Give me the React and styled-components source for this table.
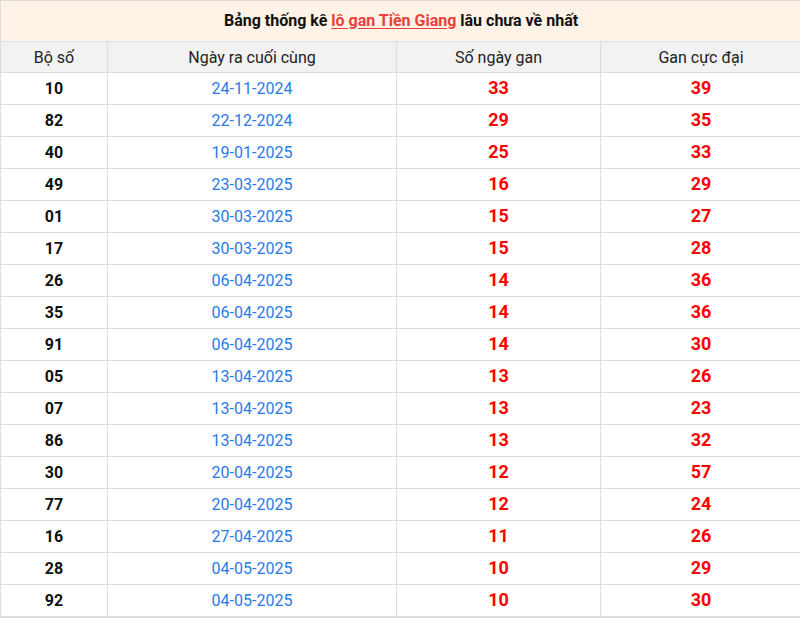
import React from "react";
import styled, { createGlobalStyle } from "styled-components";

const GlobalStyle = createGlobalStyle`
  body {
    margin: 0;
    background: #ffffff;
    font-family: Roboto, "Noto Sans", Arial, sans-serif;
    overflow: hidden;
  }
`;

const rows = [
  ["10", "24-11-2024", 33, 39],
  ["82", "22-12-2024", 29, 35],
  ["40", "19-01-2025", 25, 33],
  ["49", "23-03-2025", 16, 29],
  ["01", "30-03-2025", 15, 27],
  ["17", "30-03-2025", 15, 28],
  ["26", "06-04-2025", 14, 36],
  ["35", "06-04-2025", 14, 36],
  ["91", "06-04-2025", 14, 30],
  ["05", "13-04-2025", 13, 26],
  ["07", "13-04-2025", 13, 23],
  ["86", "13-04-2025", 13, 32],
  ["30", "20-04-2025", 12, 57],
  ["77", "20-04-2025", 12, 24],
  ["16", "27-04-2025", 11, 26],
  ["28", "04-05-2025", 10, 29],
  ["92", "04-05-2025", 10, 30],
];

const Table = styled.table`
  width: 801px;
  border-collapse: collapse;
  table-layout: fixed;
  font-family: Roboto, "Noto Sans", Arial, sans-serif;
  border-bottom: 2px solid #dddddd;
`;

const Caption = styled.th`
  height: 38px;
  padding: 0 0 2px;
  background: #fff2e6;
  border: 1px solid #dddddd;
  font-size: 16px;
  font-weight: 700;
  color: #111111;
  text-align: center;
`;

const RedLink = styled.a`
  color: #e8413a;
  text-decoration: underline;
  text-underline-offset: 2px;
`;

const HeadCell = styled.th`
  height: 30px;
  padding: 0;
  background: #f2f2f2;
  border: 1px solid #dddddd;
  font-size: 16px;
  font-weight: 400;
  color: #222222;
  text-align: center;
`;

const Cell = styled.td`
  height: 31px;
  padding: 0;
  border: 1px solid #dddddd;
  text-align: center;
  font-size: ${(p) => (p.$kind === "red" ? "18px" : "16px")};
  font-weight: ${(p) => (p.$kind === "date" ? 400 : 700)};
  color: ${(p) =>
    p.$kind === "date" ? "#2a7be4" : p.$kind === "red" ? "#ff0000" : "#111111"};
`;

const Lift = styled.span`
  position: relative;
  top: -1px;
`;

export default function App() {
  return (
    <>
      <GlobalStyle />
      <Table>
        <colgroup>
          <col style={{ width: 107 }} />
          <col style={{ width: 289 }} />
          <col style={{ width: 204 }} />
          <col style={{ width: 201 }} />
        </colgroup>
        <thead>
          <tr>
            <Caption colSpan={4}>
              Bảng thống kê <RedLink href="#">lô gan Tiền Giang</RedLink> lâu chưa về nhất
            </Caption>
          </tr>
          <tr>
            <HeadCell>Bộ số</HeadCell>
            <HeadCell>Ngày ra cuối cùng</HeadCell>
            <HeadCell>Số ngày gan</HeadCell>
            <HeadCell>Gan cực đại</HeadCell>
          </tr>
        </thead>
        <tbody>
          {rows.map(([num, date, days, max]) => (
            <tr key={num}>
              <Cell>{num}</Cell>
              <Cell $kind="date">{date}</Cell>
              <Cell $kind="red"><Lift>{days}</Lift></Cell>
              <Cell $kind="red"><Lift>{max}</Lift></Cell>
            </tr>
          ))}
        </tbody>
      </Table>
    </>
  );
}
